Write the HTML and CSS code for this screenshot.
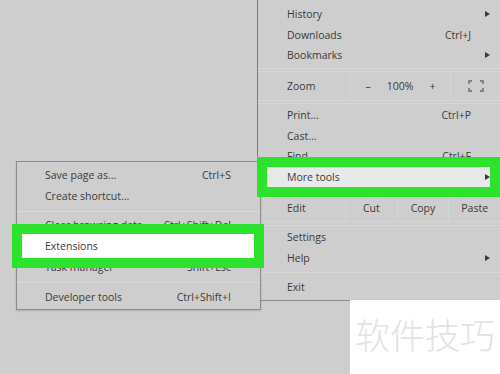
FILE: index.html
```html
<!DOCTYPE html>
<html lang="en">
<head>
  <meta charset="UTF-8">
  <meta name="viewport" content="width=device-width, initial-scale=1">
  <title>More tools - Extensions</title>
  <link rel="stylesheet" href="styles.css">
</head>
<body>

  <div class="screen">

    <!-- Menu principal de Chrome -->
    <div class="menu main-menu">
      <div class="item"><span>History</span><i class="arrow"></i></div>
      <div class="item"><span>Downloads</span><span class="key">Ctrl+J</span></div>
      <div class="item"><span>Bookmarks</span><i class="arrow"></i></div>
      <div class="sep sep-a"></div>
      <div class="row zoom-row">
        <span class="cell cell-label">Zoom</span>
        <span class="cell zoom-ctl"><span>&ndash;</span><span>100%</span><span>+</span></span>
        <span class="cell full">
          <svg width="16" height="12" viewBox="0 0 16 12">
            <path d="M1 4V1h3M12 1h3v3M15 8v3h-3M4 11H1V8" fill="none" stroke="#6a6a6a" stroke-width="1.4"/>
          </svg>
        </span>
      </div>
      <div class="sep sep-b"></div>
      <div class="item"><span>Print...</span><span class="key">Ctrl+P</span></div>
      <div class="item"><span>Cast...</span></div>
      <div class="item"><span>Find</span><span class="key">Ctrl+F</span></div>
      <div class="item marcado gris"><span>More tools</span><i class="arrow"></i></div>
      <div class="sep sep-c"></div>
      <div class="row edit-row">
        <span class="cell cell-label">Edit</span>
        <span class="cell">Cut</span>
        <span class="cell">Copy</span>
        <span class="cell">Paste</span>
      </div>
      <div class="sep sep-d"></div>
      <div class="item"><span>Settings</span></div>
      <div class="item"><span>Help</span><i class="arrow"></i></div>
      <div class="sep sep-e"></div>
      <div class="item"><span>Exit</span></div>
    </div>

    <!-- Submenu "More tools" -->
    <div class="menu sub-menu">
      <div class="item"><span>Save page as...</span><span class="key">Ctrl+S</span></div>
      <div class="item"><span>Create shortcut...</span></div>
      <div class="sep sep-f"></div>
      <div class="item"><span>Clear browsing data...</span><span class="key">Ctrl+Shift+Del</span></div>
      <div class="item marcado blanco"><span>Extensions</span></div>
      <div class="item"><span>Task manager</span><span class="key">Shift+Esc</span></div>
      <div class="sep sep-g"></div>
      <div class="item"><span>Developer tools</span><span class="key">Ctrl+Shift+I</span></div>
    </div>

    <div class="marca">软件技巧</div>
  </div>

</body>
</html>
```

FILE: styles.css
```css
* {
  margin: 0;
  padding: 0;
  box-sizing: border-box;
}

body {
  font-family: 'Open Sans', 'Liberation Sans', sans-serif;
  font-size: 10.5px;
  color: #3a3a3a;
  background-color: #cecece;
  overflow: hidden;
}

.screen {
  position: relative;
  width: 500px;
  height: 374px;
  background-color: #cecece;
}

/* Menus */
.menu {
  position: absolute;
  background-color: #cecece;
}

.main-menu {
  left: 257px;
  right: 0;
  top: 0;
  height: 301px;
  padding-top: 4px;
  border-left: 1px solid #7c7c7c;
  border-bottom: 1px solid #8a8a8a;
}

.sub-menu {
  left: 16px;
  top: 161px;
  width: 245px;
  height: 149px;
  padding-top: 2.5px;
  border: 1px solid #8c8c8c;
  box-shadow: 0 1px 2px rgba(0,0,0,0.15);
}

.item {
  display: flex;
  align-items: center;
  justify-content: space-between;
  height: 20.5px;
  padding-left: 29px;
  padding-right: 29px;
  white-space: nowrap;
}

.sub-menu .item {
  height: 21px;
  padding-left: 28px;
}

.key {
  color: #3a3a3a;
}

.arrow {
  width: 0;
  height: 0;
  margin-right: -19px;
  border-top: 3.5px solid transparent;
  border-bottom: 3.5px solid transparent;
  border-left: 5px solid #3a3a3a;
}

/* Separadores */
.sep {
  position: relative;
}

.sep::after {
  content: '';
  position: absolute;
  left: 0;
  right: 0;
  top: 50%;
  height: 1px;
  background-color: #d8d8d8;
}

.sep-a { height: 5.5px; }
.sep-b { height: 4px; }
.sep-c { height: 7px; }
.sep-d { height: 5px; }
.sep-e { height: 8.5px; }
.sep-f { height: 8px; }
.sep-g { height: 9px; }

/* Filas con celdas */
.row {
  display: flex;
  border-top: 1px solid #d6d6d6;
  border-bottom: 1px solid #d6d6d6;
}

.zoom-row { height: 30px; }
.edit-row { height: 28px; }

.cell {
  display: flex;
  align-items: center;
  justify-content: center;
  border-left: 1px solid #d6d6d6;
}

.cell-label {
  justify-content: flex-start;
  padding-left: 29px;
  border-left: none;
}

.zoom-row .cell-label { width: 92px; }
.zoom-ctl { width: 100px; gap: 16px; }
.full { flex: 1; }

.edit-row .cell-label { width: 87px; }
.edit-row .cell { flex: 1; }
.edit-row .cell-label { flex: none; }

/* Recuadros verdes */
.marcado {
  position: relative;
  z-index: 1;
}

.marcado::before {
  content: '';
  position: absolute;
  z-index: -1;
  border: 10px solid #2de22d;
}

.gris::before {
  left: -1px;
  right: 0;
  top: -9.5px;
  bottom: -10px;
  background-color: #e9e9e9;
}

.blanco::before {
  left: -5px;
  right: -4px;
  top: -11.5px;
  bottom: -11.5px;
  background-color: #ffffff;
}

/* Marca de agua */
.marca {
  position: absolute;
  right: 0;
  bottom: 0;
  width: 150px;
  height: 74px;
  padding-top: 13px;
  padding-left: 5px;
  background-color: #ffffff;
  color: #e3e3e3;
  font-family: 'Noto Sans CJK SC', sans-serif;
  font-size: 35px;
  font-weight: 300;
  line-height: 1.2;
}
```
